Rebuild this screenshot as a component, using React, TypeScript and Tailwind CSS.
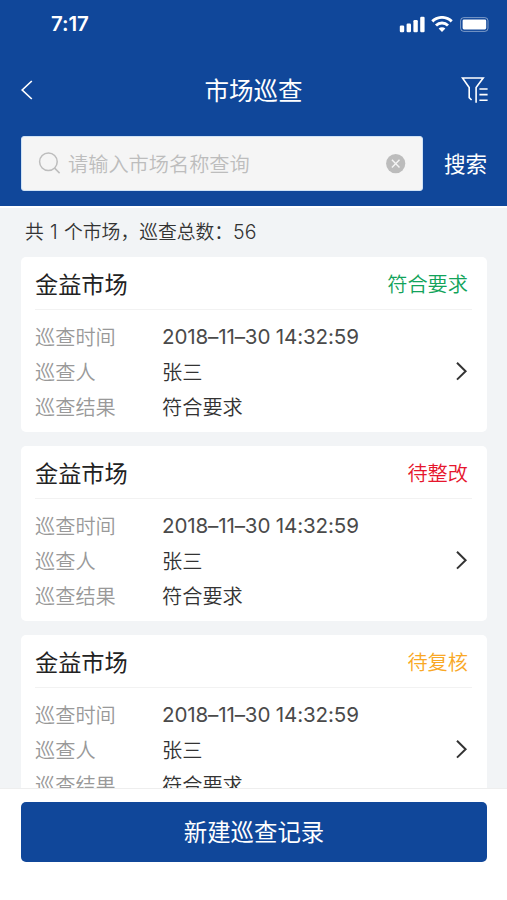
type Inspection = { name: string; status: string; tone: string; time: string; person: string; result: string };

const inspections: Inspection[] = [
  { name: "金益市场", status: "符合要求", tone: "text-[#12a35a]", time: "2018–11–30 14:32:59", person: "张三", result: "符合要求" },
  { name: "金益市场", status: "待整改", tone: "text-[#e6162d]", time: "2018–11–30 14:32:59", person: "张三", result: "符合要求" },
  { name: "金益市场", status: "待复核", tone: "text-[#f9a825]", time: "2018–11–30 14:32:59", person: "张三", result: "符合要求" },
];

function StatusBar() {
  return (
    <div className="flex h-[48px] items-center justify-between pl-[51px] pr-[18px]">
      <span className="pt-px font-[Inter,sans-serif] text-[20.5px] font-semibold leading-none tracking-[-0.1px]">7:17</span>
      <div className="flex items-center">
        <svg width="26" height="17" viewBox="0 0 26 17" fill="currentColor">
          <rect x="0.8" y="9.5" width="4.4" height="6.8" rx="1.2" />
          <rect x="7.6" y="7.6" width="4.4" height="8.7" rx="1.2" />
          <rect x="14.4" y="4" width="4.4" height="12.3" rx="1.2" />
          <rect x="21.2" y="0.8" width="4.4" height="15.5" rx="1.2" />
        </svg>
        <svg className="ml-[6px]" width="22" height="17" viewBox="0 0 22 17" fill="none" stroke="currentColor" strokeWidth="2.9">
          <path d="M1.3 5.4a13.8 13.8 0 0 1 19.4 0" />
          <path d="M5 9.5a8.6 8.6 0 0 1 12 0" />
          <path d="M11 16 7.6 12.6a4.9 4.9 0 0 1 6.8 0Z" fill="currentColor" stroke="none" />
        </svg>
        <svg className="ml-[7px]" width="29" height="15" viewBox="0 0 29 15">
          <rect x="0.6" y="0.6" width="27.4" height="13.8" rx="3.2" fill="none" stroke="white" strokeOpacity="0.45" />
          <rect x="2.6" y="2.4" width="23.6" height="10" rx="1.4" fill="white" />
        </svg>
      </div>
    </div>
  );
}

function Header() {
  return (
    <header className="h-[206px] shrink-0 bg-[#10479a] text-white">
      <StatusBar />
      <div className="flex h-[84px] items-center justify-between pl-[21px] pr-[18px]">
        <svg width="28" height="20" viewBox="0 0 28 20" fill="none" stroke="currentColor" strokeWidth="1.7">
          <path d="M10.8 1 1.2 10l9.6 9" />
        </svg>
        <h1 className="pr-[3px] pt-[4px] text-[24.5px] font-normal leading-none">市场巡查</h1>
        <svg width="28" height="28" viewBox="0 0 28 28" fill="none" stroke="currentColor" strokeWidth="1.6">
          <path d="M10.6 24 8.2 21.6V11.6L1.5 2h20.7l-7.1 9.6V26.8" />
          <path d="M18.4 13h8.2M18.4 18.6h8.2M18.4 24.2h8.2" />
        </svg>
      </div>
      <div className="flex items-center pl-[21px] pt-[4px]">
        <div className="flex h-[55px] w-[402px] items-center rounded-[3px] border border-[#cfe2f5] bg-[#f5f5f5] px-[16px]">
          <svg width="23" height="23" viewBox="0 0 23 23" fill="none" stroke="#bdbdbd" strokeWidth="1.5">
            <circle cx="10.4" cy="9.8" r="8.8" />
            <path d="m16.6 16.1 5 5" />
          </svg>
          <span className="ml-[7px] flex-1 pt-[2.5px] text-[20.2px] font-[350] leading-none text-[#bdbdbd]">请输入市场名称查询</span>
          <svg width="20" height="20" viewBox="0 0 20 20">
            <circle cx="9.7" cy="9.6" r="9.6" fill="#bcbcbc" />
            <path d="m5.9 5.8 7.6 7.6m0-7.6-7.6 7.6" stroke="#f5f5f5" strokeWidth="1.4" />
          </svg>
        </div>
        <span className="ml-[21px] pt-[3px] text-[21.6px] leading-none">搜索</span>
      </div>
    </header>
  );
}

function Row({ label, value, numeric }: { label: string; value: string; numeric?: boolean }) {
  return (
    <div className="flex h-[35.3px] items-center leading-none">
      <span className="w-[127px] pt-[4px] font-[350] text-[#999999]">{label}</span>
      {numeric ? (
        <span className="pt-[3px] font-[Inter,sans-serif] text-[20.6px] font-normal tracking-[-0.15px] text-[#4a4a4a]">{value}</span>
      ) : (
        <span className="pt-[4px] font-[350] text-[#333333]">{value}</span>
      )}
    </div>
  );
}

function Card({ item }: { item: Inspection }) {
  return (
    <article className="h-[175px] shrink-0 rounded-[5px] bg-white pl-[14px] pr-[15px] text-[20.2px]">
      <div className="flex h-[53px] items-center justify-between border-b border-[#f2f2f2] pr-[4px]">
        <h2 className="pt-[5px] text-[23.2px] font-normal leading-none text-[#222222]">{item.name}</h2>
        <span className={"pt-[5px] font-[350] leading-none " + item.tone}>{item.status}</span>
      </div>
      <div className="flex items-center justify-between pr-[4px] pt-[8px]">
        <div>
          <Row label="巡查时间" value={item.time} numeric />
          <Row label="巡查人" value={item.person} />
          <Row label="巡查结果" value={item.result} />
        </div>
        <svg width="13" height="20" viewBox="0 0 13 20" fill="none" stroke="#333333" strokeWidth="2">
          <path d="m2 1.8 8.6 8.4L2 18.6" />
        </svg>
      </div>
    </article>
  );
}

export default function App() {
  return (
    <div className="flex h-[900px] w-[507px] flex-col overflow-hidden bg-[#f2f4f6] font-['Liberation_Sans','Noto_Sans_CJK_SC',sans-serif]">
      <Header />
      <main className="flex min-h-0 flex-1 flex-col overflow-hidden border-t-2 border-white pl-[21px] pr-[20px]">
        <p className="h-[49px] shrink-0 pl-[4px] font-['Inter','Noto_Sans_CJK_SC',sans-serif] text-[18.8px] font-[350] leading-[49px] text-[#333333]">
          共 <span className="px-px text-[19.5px]">1</span> 个市场，巡查总数：<span className="text-[19.5px]">56</span>
        </p>
        <div className="flex flex-col gap-[14px]">
          {inspections.map((item, i) => (
            <Card key={i} item={item} />
          ))}
        </div>
      </main>
      <footer className="h-[112px] shrink-0 border-t border-[#eeeeee] bg-white pl-[21px] pr-[20px] pt-[13px]">
        <button className="flex h-[60px] w-full items-center justify-center rounded-[5px] bg-[#10479a] pt-[4px] text-[23.4px] leading-none text-white">新建巡查记录</button>
      </footer>
    </div>
  );
}
